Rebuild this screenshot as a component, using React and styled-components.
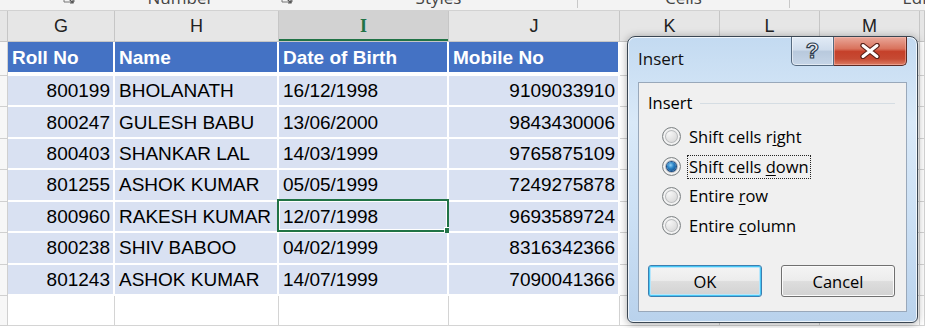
import React from 'react';
import styled, { createGlobalStyle, css } from 'styled-components';

const Global = createGlobalStyle`
  html, body { margin: 0; padding: 0; background: #fff; }
  body { width: 925px; height: 328px; overflow: hidden; }
`;

const COLS = '8px 107px 164px 170px 171px 100px 100px 100px 5px';

const Screen = styled.div`
  position: relative;
  width: 925px;
  height: 328px;
  overflow: hidden;
  background: #fff;
  font-family: "Liberation Sans", Arial, sans-serif;
`;

/* ---------- ribbon strip (cut off by the window edge) ---------- */
const Ribbon = styled.div`
  display: flex;
  height: 10px;
  overflow: hidden;
  background: #f3f3f3;
  border-bottom: 1px solid #d2d2d2;
  box-sizing: content-box;
`;
const RibbonGroup = styled.div`
  flex: none;
  width: ${p => p.$w}px;
  height: 8px;
  display: flex;
  align-items: flex-start;
  padding-right: ${p => (p.$launcher ? 4 : 0)}px;
  box-sizing: border-box;
  border-right: ${p => (p.$sep ? '1px solid #c8c8c8' : '1px solid transparent')};
`;
const RibbonLabel = styled.div`
  flex: 1;
  text-align: center;
  font-family: "Open Sans", "Noto Sans", sans-serif;
  font-size: 17px;
  line-height: 20px;
  margin-top: -12px;
  color: #444;
  white-space: nowrap;
`;
const Launcher = styled.svg`
  flex: none;
  width: 16px;
  height: 16px;
  margin-top: -11px;
`;

/* ---------- column header ---------- */
const ColHeaderRow = styled.div`
  display: grid;
  grid-template-columns: ${COLS};
  height: 31px;
  box-sizing: border-box;
  background: #e6e6e6;
  border-bottom: 1px solid #c6c6c6;
`;
const ColHead = styled.div`
  display: flex;
  align-items: center;
  justify-content: center;
  font-size: 18px;
  color: #222;
  border-right: 1px solid #c6c6c6;
  box-sizing: border-box;
  ${p =>
    p.$sel &&
    css`
      background: #d2d2d2;
      color: #217346;
      font-family: "Liberation Serif", serif;
      font-weight: bold;
      box-shadow: inset 0 -2px 0 #217346;
    `}
`;

/* ---------- sheet rows ---------- */
const Row = styled.div`
  display: grid;
  grid-template-columns: ${COLS};
  height: ${p => p.$h}px;
`;
const RowHead = styled.div`
  background: #f7f7f7;
  border-right: 1px solid #d0d0d0;
  border-bottom: 1px solid #d0d0d0;
  box-sizing: border-box;
`;

const kinds = {
  head: css`
    background: #4472c4;
    color: #fff;
    font-weight: bold;
    border-right: 2px solid #fff;
    border-bottom: 4px solid #fff;
  `,
  data: css`
    background: #d9e1f2;
    color: #000;
    border-right: 2px solid #fff;
    border-bottom: 2px solid #fff;
  `,
  empty: css`
    background: #fff;
    border-right: 1px solid #d4d4d4;
    border-bottom: 1px solid #d4d4d4;
  `,
};

const Cell = styled.div`
  position: relative;
  display: flex;
  align-items: center;
  justify-content: ${p => (p.$right ? 'flex-end' : 'flex-start')};
  padding: 1px ${p => (p.$right ? '3px' : '0')} 0 ${p => (p.$right ? '0' : '4px')};
  box-sizing: border-box;
  font-size: 19px;
  white-space: nowrap;
  ${p => kinds[p.$kind]}
`;

const Selection = styled.div`
  position: absolute;
  left: -2px;
  top: -3px;
  right: -2px;
  bottom: -1px;
  border: 2px solid #217346;
  box-shadow: inset 0 0 0 1px #fff;
  pointer-events: none;
`;
const FillHandle = styled.div`
  position: absolute;
  right: -6px;
  bottom: -6px;
  width: 7px;
  height: 7px;
  background: #217346;
  border: 1px solid #fff;
`;

/* ---------- dialog ---------- */
const Dialog = styled.div`
  position: absolute;
  left: 627px;
  top: 36px;
  width: 291px;
  height: 287px;
  box-sizing: border-box;
  border: 1px solid #3a4652;
  border-radius: 8px 8px 6px 6px;
  background: linear-gradient(180deg, #c3daf1 0%, #d9e9f8 30%, #cde1f5 60%, #b9d2ec 100%);
  box-shadow: inset 0 0 0 1px rgba(255, 255, 255, 0.75), 0 1px 8px rgba(0, 0, 0, 0.35);
  display: flex;
  flex-direction: column;
  font-family: "Open Sans", "Noto Sans", sans-serif;
  color: #000;
`;
const TitleBar = styled.div`
  display: flex;
  align-items: flex-start;
  height: 45px;
  padding-left: 10px;
  padding-right: 10px;
`;
const Title = styled.div`
  font-size: 17px;
  line-height: 22px;
  margin-top: 11px;
  color: #111;
`;
const CaptionButtons = styled.div`
  display: flex;
  margin-left: auto;
`;
const CaptionBtn = styled.div`
  height: 29px;
  display: flex;
  align-items: center;
  justify-content: center;
  box-sizing: border-box;
  border: 1px solid ${p => (p.$close ? '#5c2a24' : '#566a80')};
  border-top: none;
  ${p =>
    p.$close
      ? css`
          width: 73px;
          border-radius: 0 0 5px 0;
          border-left: none;
          background: linear-gradient(180deg, #e9a89a 0%, #d9725c 42%, #c5402a 52%, #c64a33 78%, #dc7c63 100%);
          box-shadow: inset 0 0 0 1px rgba(255, 200, 190, 0.45);
        `
      : css`
          width: 43px;
          border-radius: 0 0 0 5px;
          background: linear-gradient(180deg, #e2ebf6 0%, #cfdcec 45%, #b8c9dd 52%, #c6d5e7 100%);
          box-shadow: inset 0 0 0 1px rgba(255, 255, 255, 0.5);
        `}
`;
const HelpGlyph = styled.span`
  font-family: "Liberation Sans", Arial, sans-serif;
  font-weight: bold;
  font-size: 22px;
  line-height: 1;
  color: #eef2f7;
  -webkit-text-stroke: 1.2px #2f3d4e;
  margin-top: -1px;
`;
const Panel = styled.div`
  flex: 1;
  margin: 0 10px 10px 10px;
  border: 1px solid #99a8ba;
  background: #f0f0f0;
  display: flex;
  flex-direction: column;
  padding: 10px 11px 14px 9px;
`;
const GroupLabel = styled.div`
  display: flex;
  align-items: center;
  gap: 8px;
  font-size: 16.5px;
  line-height: 20px;
  &::after {
    content: '';
    flex: 1;
    height: 1px;
    background: #d5dde3;
    margin-top: 1px;
  }
`;
const RadioList = styled.div`
  display: flex;
  flex-direction: column;
  margin-top: 9px;
  padding-left: 14px;
`;
const RadioRow = styled.div`
  height: 29.7px;
  display: flex;
  align-items: center;
  gap: 7px;
  font-size: 16.5px;
`;
const RadioDot = styled.span`
  position: relative;
  flex: none;
  width: 19px;
  height: 19px;
  border-radius: 50%;
  box-sizing: border-box;
  border: 1px solid #7f8486;
  background: radial-gradient(circle at 35% 30%, #f7f7f7 0%, #e2e2e2 45%, #c4c6c8 100%);
  box-shadow: inset 0 0 0 2px #f2f2f2, inset 0 0 0 3px #b9bbbd;
  ${p =>
    p.$on &&
    css`
      &::after {
        content: '';
        position: absolute;
        left: 4px;
        top: 4px;
        width: 9px;
        height: 9px;
        border-radius: 50%;
        background: radial-gradient(circle at 40% 35%, #8fd0f5 0%, #2a83c6 40%, #0b3d78 100%);
        box-shadow: 0 0 0 1px #1d4f86;
      }
    `}
`;
const RadioText = styled.span`
  white-space: nowrap;
  padding: 0 1px;
  line-height: 22px;
  outline: ${p => (p.$focus ? '1px dotted #222' : 'none')};
  outline-offset: 0;
`;
const Accel = styled.span`
  text-decoration: underline;
  text-underline-offset: 2px;
`;
const ButtonRow = styled.div`
  margin-top: auto;
  display: flex;
  justify-content: space-between;
`;
const Button = styled.div`
  width: 114px;
  height: 32px;
  box-sizing: border-box;
  display: flex;
  align-items: center;
  justify-content: center;
  font-size: 16.5px;
  border-radius: 3px;
  background: linear-gradient(180deg, #f4f4f4 0%, #ececec 48%, #dddddd 52%, #d2d2d2 100%);
  ${p =>
    p.$default
      ? css`
          border: 1px solid #3c7fb1;
          box-shadow: inset 0 0 0 1px #48c7f5, inset 0 0 0 2px #b7e6fb;
        `
      : css`
          border: 1px solid #707070;
          box-shadow: inset 0 0 0 1px #fbfbfb;
        `}
`;

const rows = [
  ['800199', 'BHOLANATH', '16/12/1998', '9109033910'],
  ['800247', 'GULESH BABU', '13/06/2000', '9843430006'],
  ['800403', 'SHANKAR LAL', '14/03/1999', '9765875109'],
  ['801255', 'ASHOK KUMAR', '05/05/1999', '7249275878'],
  ['800960', 'RAKESH KUMAR', '12/07/1998', '9693589724'],
  ['800238', 'SHIV BABOO', '04/02/1999', '8316342366'],
  ['801243', 'ASHOK KUMAR', '14/07/1999', '7090041366'],
];

const Empties = () => (
  <>
    <Cell $kind="empty" />
    <Cell $kind="empty" />
    <Cell $kind="empty" />
    <Cell $kind="empty" />
  </>
);

const LauncherIcon = () => (
  <Launcher viewBox="0 0 16 16">
    <path d="M3 3 V13 H13 V3 Z" fill="none" stroke="#777" strokeWidth="1" />
    <path d="M7 9 L12 14 M9 14 H12 V11" fill="none" stroke="#555" strokeWidth="1.2" />
  </Launcher>
);

export default function App() {
  return (
    <Screen>
      <Global />
      <Ribbon>
        <RibbonGroup $w={82} $launcher>
          <RibbonLabel />
          <LauncherIcon />
        </RibbonGroup>
        <RibbonGroup $w={218} $launcher>
          <RibbonLabel>Number</RibbonLabel>
          <LauncherIcon />
        </RibbonGroup>
        <RibbonGroup $w={278} $sep>
          <RibbonLabel>Styles</RibbonLabel>
        </RibbonGroup>
        <RibbonGroup $w={212} $sep>
          <RibbonLabel>Cells</RibbonLabel>
        </RibbonGroup>
        <RibbonGroup $w={280}>
          <RibbonLabel>Editing</RibbonLabel>
        </RibbonGroup>
      </Ribbon>

      <ColHeaderRow>
        <ColHead />
        <ColHead>G</ColHead>
        <ColHead>H</ColHead>
        <ColHead $sel>I</ColHead>
        <ColHead>J</ColHead>
        <ColHead>K</ColHead>
        <ColHead>L</ColHead>
        <ColHead>M</ColHead>
        <ColHead />
      </ColHeaderRow>

      <Row $h={34}>
        <RowHead />
        <Cell $kind="head">Roll No</Cell>
        <Cell $kind="head">Name</Cell>
        <Cell $kind="head">Date of Birth</Cell>
        <Cell $kind="head">Mobile No</Cell>
        <Empties />
      </Row>

      {rows.map((r, i) => (
        <Row key={r[0] + i} $h={31.43}>
          <RowHead />
          <Cell $kind="data" $right>{r[0]}</Cell>
          <Cell $kind="data">{r[1]}</Cell>
          <Cell $kind="data">
            {r[2]}
            {i === 4 && (
              <Selection>
                <FillHandle />
              </Selection>
            )}
          </Cell>
          <Cell $kind="data" $right>{r[3]}</Cell>
          <Empties />
        </Row>
      ))}

      <Row $h={30}>
        <RowHead />
        <Cell $kind="empty" />
        <Cell $kind="empty" />
        <Cell $kind="empty" />
        <Cell $kind="empty" />
        <Empties />
      </Row>

      <Dialog>
        <TitleBar>
          <Title>Insert</Title>
          <CaptionButtons>
            <CaptionBtn>
              <HelpGlyph>?</HelpGlyph>
            </CaptionBtn>
            <CaptionBtn $close>
              <svg width="22" height="16" viewBox="0 0 22 16">
                <path d="M4 2.5 L18 13.5 M18 2.5 L4 13.5" stroke="#5a2119" strokeWidth="5.4" strokeLinecap="round" />
                <path d="M4 2.5 L18 13.5 M18 2.5 L4 13.5" stroke="#fff" strokeWidth="3" strokeLinecap="round" />
              </svg>
            </CaptionBtn>
          </CaptionButtons>
        </TitleBar>
        <Panel>
          <GroupLabel>Insert</GroupLabel>
          <RadioList>
            <RadioRow>
              <RadioDot />
              <RadioText>
                Shift cells r<Accel>i</Accel>ght
              </RadioText>
            </RadioRow>
            <RadioRow>
              <RadioDot $on />
              <RadioText $focus>
                Shift cells <Accel>d</Accel>own
              </RadioText>
            </RadioRow>
            <RadioRow>
              <RadioDot />
              <RadioText>
                Entire <Accel>r</Accel>ow
              </RadioText>
            </RadioRow>
            <RadioRow>
              <RadioDot />
              <RadioText>
                Entire <Accel>c</Accel>olumn
              </RadioText>
            </RadioRow>
          </RadioList>
          <ButtonRow>
            <Button $default>OK</Button>
            <Button>Cancel</Button>
          </ButtonRow>
        </Panel>
      </Dialog>
    </Screen>
  );
}
